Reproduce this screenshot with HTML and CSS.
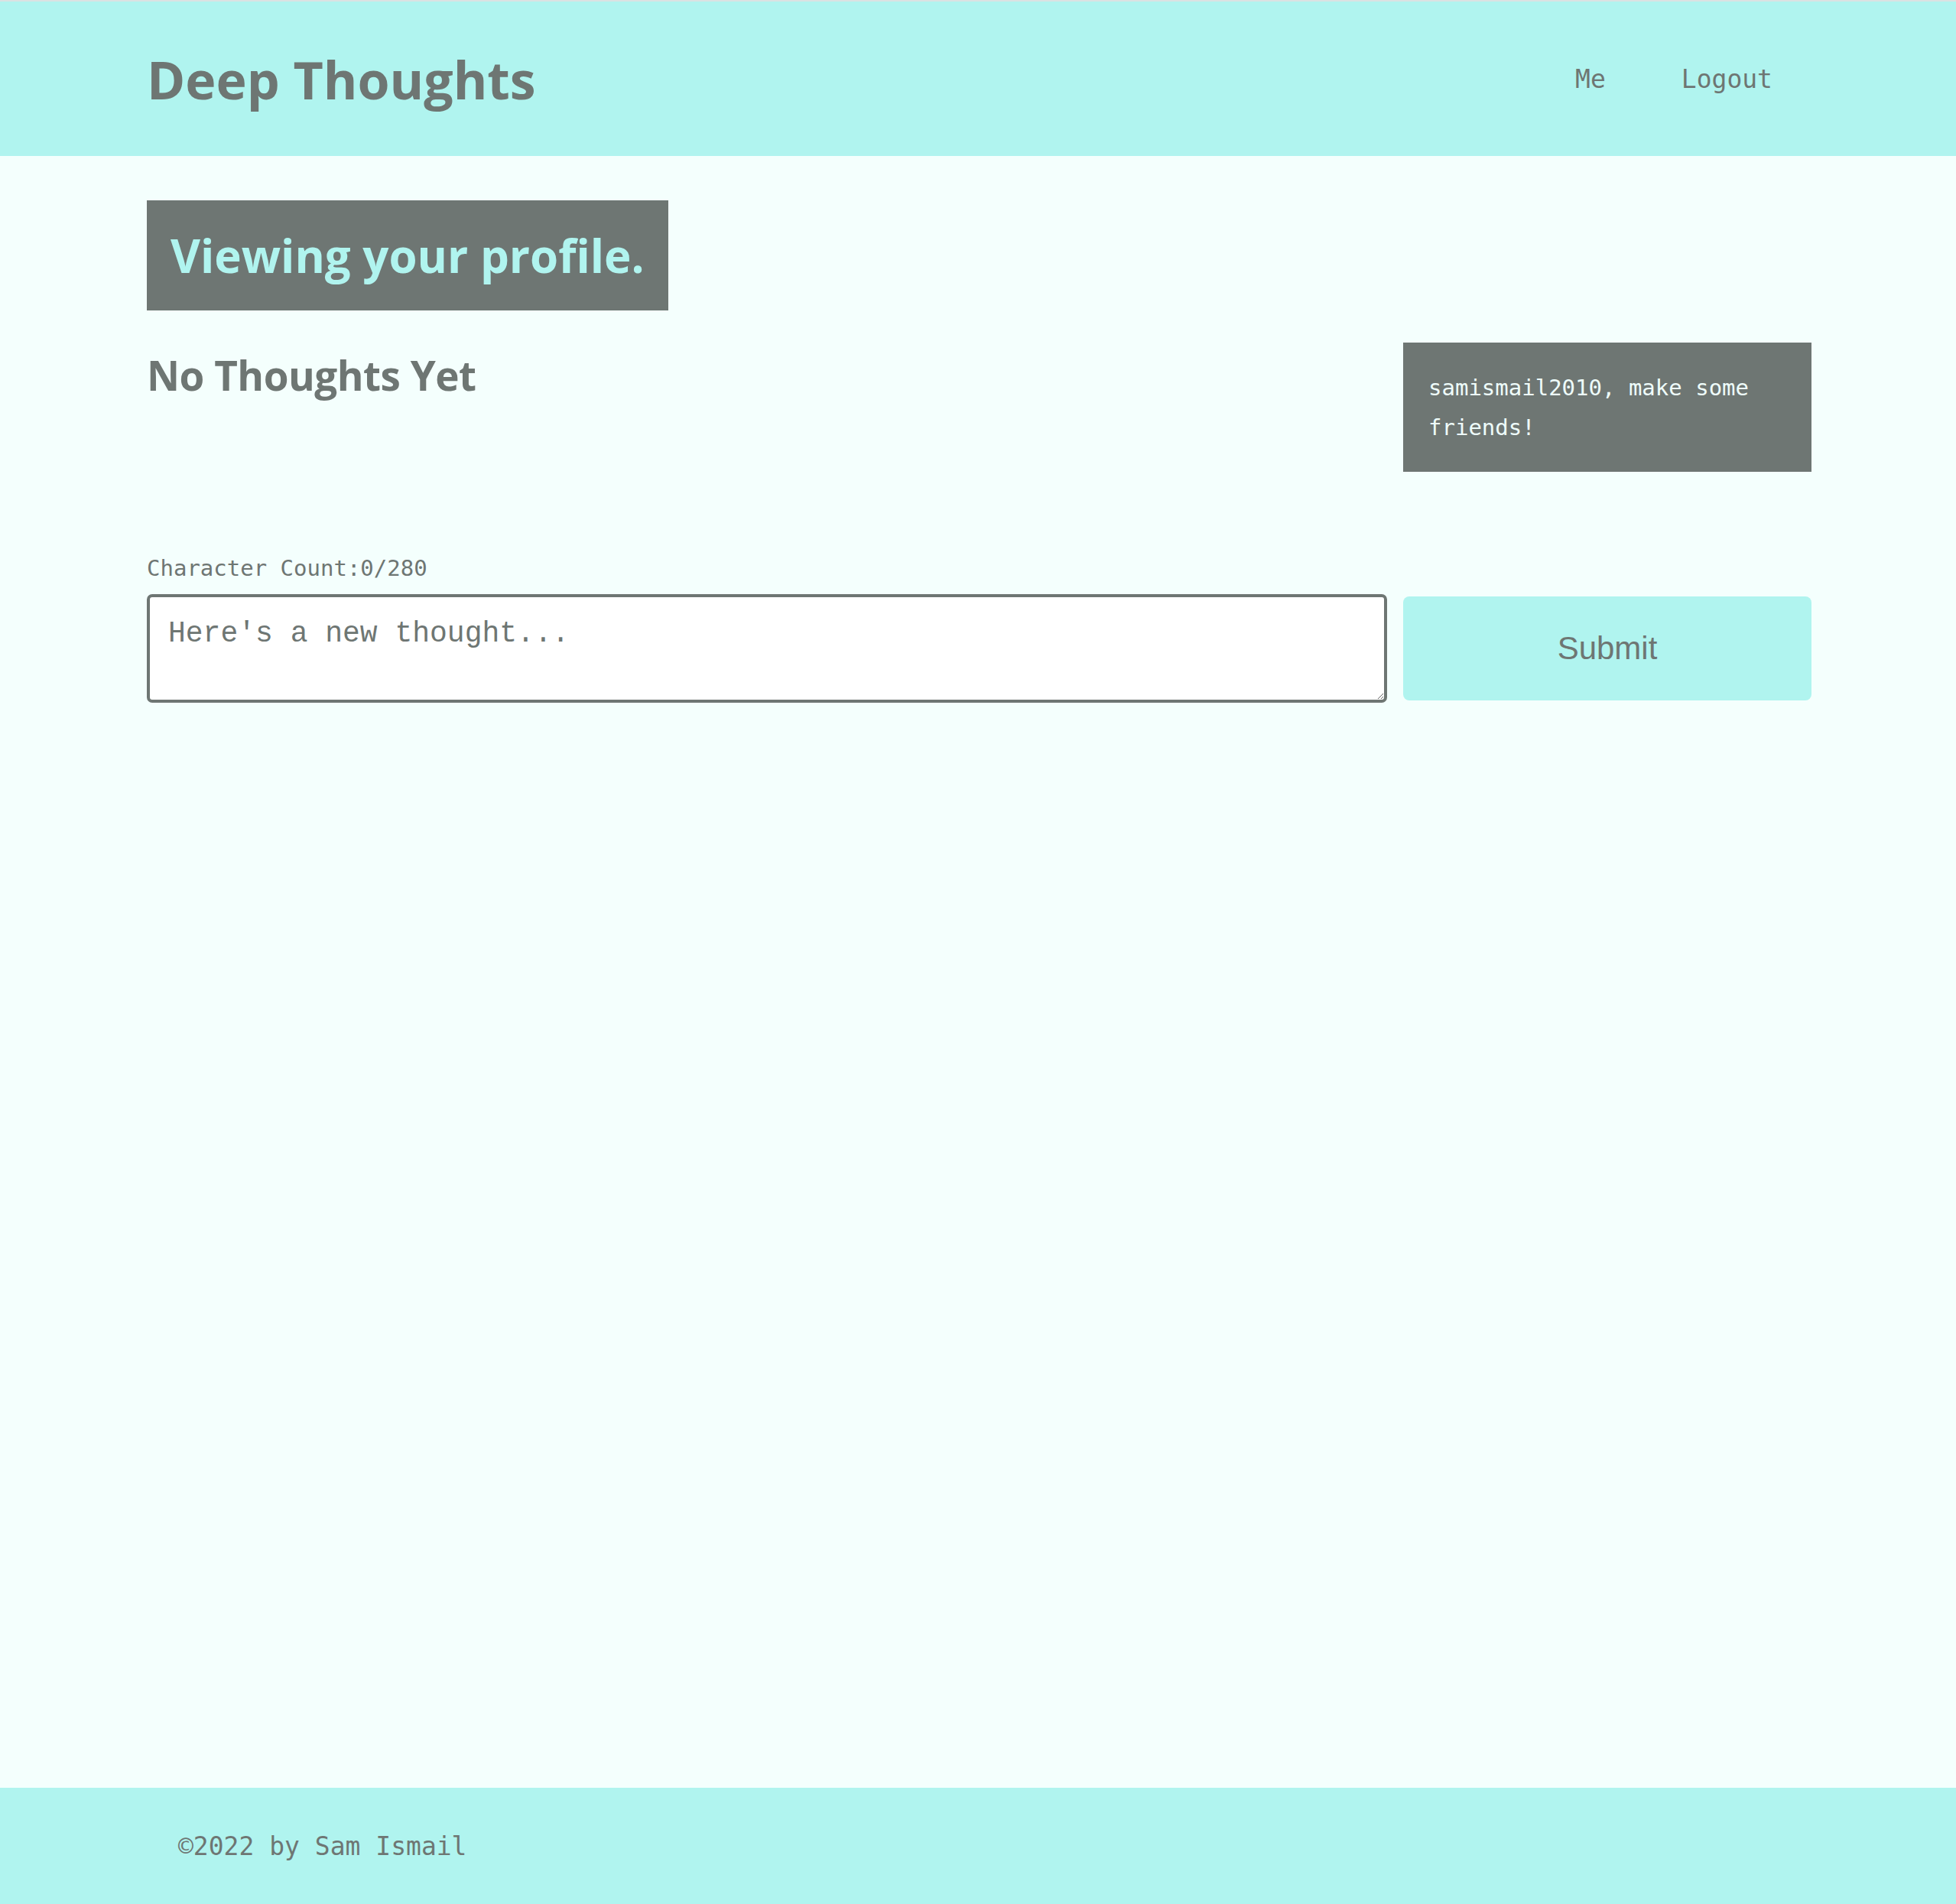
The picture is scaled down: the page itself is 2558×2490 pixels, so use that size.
FILE: index.html
```html
<!DOCTYPE html>
<html lang="en">
<head>
<meta charset="utf-8">
<title>Deep Thoughts</title>
<link rel="stylesheet" href="styles.css">
</head>
<body>
<header class="site-header">
  <h1 class="brand">Deep Thoughts</h1>
  <nav class="nav">
    <a class="nav-link" href="#">Me</a>
    <a class="nav-link" href="#">Logout</a>
  </nav>
</header>
<main class="main">
  <div class="profile-banner">Viewing your profile.</div>
  <div class="profile-row">
    <div class="thoughts-col">
      <h2 class="thoughts-title">No Thoughts Yet</h2>
    </div>
    <div class="friends-box">samismail2010, make some friends!</div>
  </div>
  <p class="char-count">Character Count:0/280</p>
  <form class="thought-form">
    <textarea class="thought-input" placeholder="Here's a new thought..."></textarea>
    <button class="submit-btn" type="button">Submit</button>
  </form>
</main>
<footer class="site-footer">
  <span class="footer-text">&copy;2022 by Sam Ismail</span>
</footer>
</body>
</html>
```

FILE: styles.css
```css
html, body {
  margin: 0;
  padding: 0;
}
body {
  min-height: 100vh;
  display: flex;
  flex-direction: column;
  background: #f4fffd;
  color: #6e7673;
  font-family: "DejaVu Sans Mono", monospace;
}
.site-header {
  border-top: 2px solid #dbe2e2;
  background: #b0f4ef;
  height: 202px;
  display: flex;
  align-items: center;
  justify-content: space-between;
  padding: 0 0 0 192px;
  box-sizing: content-box;
}
.brand {
  margin: 0;
  font-family: "Open Sans", sans-serif;
  font-weight: 700;
  font-size: 68px;
  color: #6e7673;
}
.nav {
  display: flex;
  padding-right: 240px;
}
.nav-link {
  font-family: "DejaVu Sans Mono", monospace;
  font-size: 33px;
  color: #6e7673;
  text-decoration: none;
  padding: 0 0 0 99px;
}
.main {
  flex: 1;
  padding: 58px 189px 0 192px;
}
.profile-banner {
  display: inline-block;
  background: #6e7673;
  color: #b0f4ef;
  font-family: "Open Sans", sans-serif;
  font-weight: 700;
  font-size: 60px;
  line-height: 72px;
  padding: 36px 31px;
}
.profile-row {
  display: flex;
  gap: 21px;
  margin-top: 42px;
}
.thoughts-col {
  flex: 1;
}
.thoughts-title {
  margin: 6px 0 0 0;
  font-family: "Open Sans", sans-serif;
  font-weight: 700;
  font-size: 53px;
  letter-spacing: -0.5px;
  color: #6e7673;
}
.friends-box {
  width: 534px;
  box-sizing: border-box;
  background: #6e7673;
  color: #eefcfa;
  font-size: 29px;
  line-height: 52px;
  padding: 33px 33px 32px 33px;
}
.char-count {
  margin: 109px 0 0 0;
  font-size: 29px;
  color: #6e7673;
}
.thought-form {
  display: flex;
  align-items: center;
  gap: 21px;
  margin-top: 17px;
}
.thought-input {
  flex: 1;
  height: 142px;
  box-sizing: border-box;
  border: 4px solid #6e7673;
  border-radius: 7px;
  background: #ffffff;
  padding: 26px 24px 16px 24px;
  font-family: "Liberation Mono", monospace;
  font-size: 38px;
  color: #6e7673;
}
.thought-input::placeholder {
  color: #6e7673;
}
.submit-btn {
  width: 534px;
  height: 136px;
  border: none;
  border-radius: 8px;
  background: #b0f4ef;
  color: #6e7673;
  font-family: "Liberation Sans", Arial, sans-serif;
  font-size: 42px;
}
.site-footer {
  background: #b0f4ef;
  height: 152px;
  display: flex;
  align-items: center;
  padding-left: 233px;
}
.footer-text {
  font-size: 33px;
  color: #6e7673;
}
```
